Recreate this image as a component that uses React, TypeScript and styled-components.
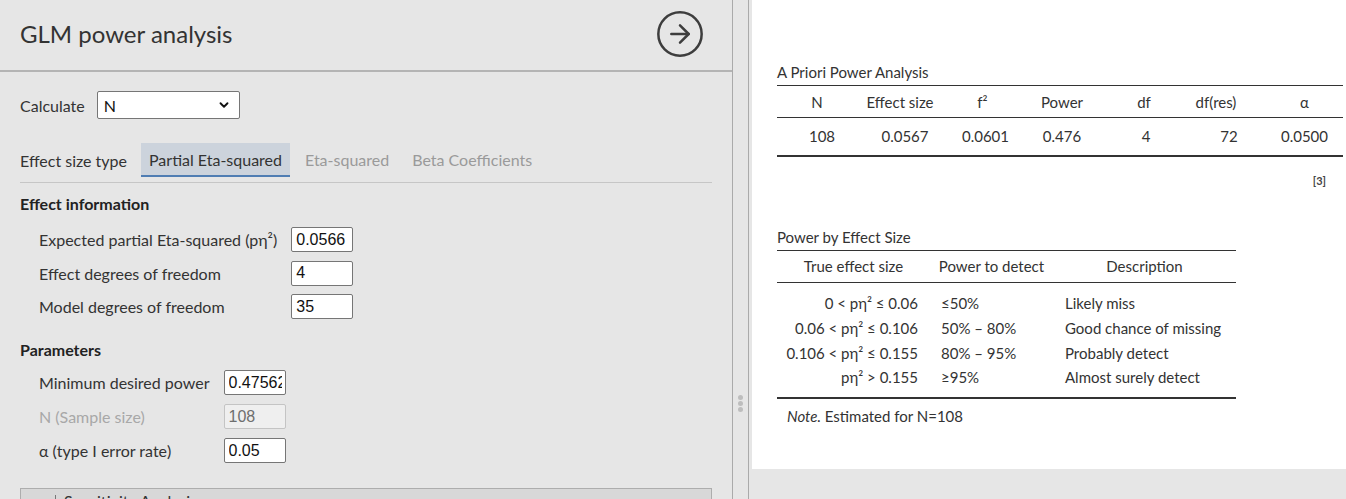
import React from 'react';
import styled, { createGlobalStyle } from 'styled-components';
import { CircleArrowRight, ChevronDown, Plus } from 'lucide-react';

const GlobalStyle = createGlobalStyle`
  html, body { margin: 0; padding: 0; height: 100%; overflow: hidden; background: #e6e6e6; }
  #root { height: 100%; }
  * { box-sizing: border-box; }
`;

const UI_FONT = `Lato, "Segoe UI", "Noto Sans", sans-serif`;
const INPUT_FONT = `"Liberation Sans", Arial, sans-serif`;

const Page = styled.div`
  display: flex;
  height: 499px;
  font-family: ${UI_FONT};
  color: #333;
`;

const LeftPanel = styled.section`
  width: 733px;
  flex: none;
  border-right: 1px solid #aaa;
  display: flex;
  flex-direction: column;
  overflow: hidden;
`;

const Header = styled.header`
  height: 72px;
  flex: none;
  display: flex;
  align-items: center;
  justify-content: space-between;
  padding: 0 26px 3px 20px;
  border-bottom: 2px solid #b4b4b4;
`;

const Title = styled.h1`
  margin: 0;
  font-size: 24px;
  font-weight: 400;
  color: #333;
`;

const Body = styled.div`
  padding: 19px 20px 0 20px;
  display: flex;
  flex-direction: column;
`;

const Row = styled.div`
  display: flex;
  align-items: center;
  gap: 12px;
  font-size: 16px;
`;

const SelectBox = styled.div`
  width: 143px;
  height: 28px;
  display: flex;
  align-items: center;
  justify-content: space-between;
  padding: 0 8px 0 6px;
  background: #fff;
  border: 1px solid #767676;
  border-radius: 2px;
  font-size: 16px;
  color: #111;
`;

const TabBar = styled.div`
  margin-top: 24px;
  display: flex;
  align-items: stretch;
  height: 40px;
  padding-bottom: 5px;
  border-bottom: 1px solid #c6c6c6;
  font-size: 16px;
`;

const TabLabel = styled.span`
  display: flex;
  align-items: center;
  margin-right: 14px;
  color: #333;
`;

const Tab = styled.span<{ $active?: boolean }>`
  display: flex;
  align-items: center;
  padding: 0 8px;
  margin-right: 7px;
  color: ${(p) => (p.$active ? '#333' : '#9a9a9a')};
  background: ${(p) => (p.$active ? '#ccd3dc' : 'transparent')};
  border-bottom: 2px solid ${(p) => (p.$active ? '#4f7db3' : 'transparent')};
`;

const SectionTitle = styled.h2<{ $top: number }>`
  margin: ${(p) => p.$top}px 0 0 0;
  font-size: 16px;
  line-height: 20px;
  font-weight: 700;
  color: #222;
`;

const FieldGrid = styled.div<{ $top: number; $gap: number }>`
  margin-top: ${(p) => p.$top}px;
  padding-left: 19px;
  display: grid;
  grid-template-columns: max-content 62px;
  column-gap: 14px;
  row-gap: ${(p) => p.$gap}px;
  align-items: center;
`;

const FieldLabel = styled.label<{ $disabled?: boolean }>`
  font-size: 16px;
  color: ${(p) => (p.$disabled ? '#a8a8a8' : '#333')};
`;

const TextInput = styled.input`
  width: 62px;
  height: 25px;
  padding: 0 3px 0 4px;
  border: 1px solid #767676;
  border-radius: 2px;
  background: #fff;
  font-family: ${INPUT_FONT};
  font-size: 16px;
  color: #111;
  outline: none;
  &:disabled {
    background: #efefef;
    border-color: #c4c4c4;
    color: #6e6e6e;
  }
`;

const CollapseBar = styled.div`
  margin-top: 25px;
  height: 34px;
  display: flex;
  align-items: flex-start;
  padding-top: 2px;
  line-height: 20px;
  background: #d8d8d8;
  border: 1px solid #adadad;
  font-size: 16px;
  color: #333;
`;

const CollapseIcon = styled.span`
  width: 35px;
  height: 22px;
  margin-top: 4px;
  margin-right: 8px;
  display: flex;
  align-items: flex-start;
  justify-content: center;
  padding-top: 5px;
  border-right: 1px solid #777;
  color: #555;
`;

const Splitter = styled.div`
  width: 16px;
  flex: none;
  border-right: 1px solid #aaa;
  display: flex;
  flex-direction: column;
  align-items: center;
  gap: 1px;
  padding-top: 395px;
`;

const Dot = styled.span`
  width: 5px;
  height: 5px;
  border-radius: 50%;
  background: #bdbdbd;
`;

const ResultsArea = styled.section`
  flex: 1;
  padding-left: 3px;
  display: flex;
  flex-direction: column;
`;

const ResultsDoc = styled.div`
  height: 469px;
  background: #fff;
  padding: 63px 3px 0 25px;
  font-size: 15px;
  color: #333;
`;

const TableTitle = styled.div`
  font-size: 15px;
  line-height: 18px;
  margin-bottom: 4px;
  color: #333;
`;

const Table = styled.table<{ $width: number }>`
  width: ${(p) => p.$width}px;
  border-collapse: collapse;
  table-layout: fixed;
  font-size: 15px;
  border-top: 1px solid #333;
  border-bottom: 2px solid #333;
`;

const HeadCell = styled.th<{ $w: number; $shift?: number; $h: number }>`
  width: ${(p) => p.$w}px;
  height: ${(p) => p.$h}px;
  padding: 0 0 0 ${(p) => (p.$shift ?? 0) * 2}px;
  font-weight: 400;
  text-align: center;
  border-bottom: 1px solid #333;
  white-space: nowrap;
`;

const DataCell = styled.td<{ $align: 'left' | 'right' | 'center'; $padL?: number; $padR?: number }>`
  height: 25px;
  padding: 0 ${(p) => p.$padR ?? 0}px 0 ${(p) => p.$padL ?? 0}px;
  text-align: ${(p) => p.$align};
  white-space: nowrap;
`;

const BodyRow = styled.tr<{ $first?: boolean; $last?: boolean; $h?: number }>`
  height: ${(p) => p.$h ?? 25}px;
  td {
    padding-top: ${(p) => (p.$first ? 8 : 0)}px;
    padding-bottom: ${(p) => (p.$last ? 8 : 0)}px;
  }
`;

const RefMark = styled.div`
  width: 566px;
  text-align: right;
  padding-right: 17px;
  margin-top: 17px;
  font-size: 11px;
  font-weight: 700;
  color: #444;
`;

const Block = styled.div<{ $top: number }>`
  margin-top: ${(p) => p.$top}px;
`;

const Note = styled.div`
  padding-left: 10px;
  margin-top: 8px;
  font-size: 15px;
  color: #333;
  em { font-style: italic; }
`;

const t1Cols = [
  { h: 'N', w: 80, hs: 0, d: '108', ds: 5 },
  { h: 'Effect size', w: 86, hs: 0, d: '0.0567', ds: 5 },
  { h: 'f²', w: 79, hs: 0, d: '0.0601', ds: 3 },
  { h: 'Power', w: 80, hs: 0, d: '0.476', ds: 0 },
  { h: 'df', w: 84, hs: 0, d: '4', ds: 2 },
  { h: 'df(res)', w: 60, hs: 0, d: '72', ds: 13 },
  { h: 'α', w: 97, hs: 10, d: '0.0500', ds: 10 },
];

const t2Rows = [
  ['0 < pη² ≤ 0.06', '≤50%', 'Likely miss'],
  ['0.06 < pη² ≤ 0.106', '50% – 80%', 'Good chance of missing'],
  ['0.106 < pη² ≤ 0.155', '80% – 95%', 'Probably detect'],
  ['pη² > 0.155', '≥95%', 'Almost surely detect'],
];

export default function App() {
  return (
    <>
      <GlobalStyle />
      <Page>
        <LeftPanel>
          <Header>
            <Title>GLM power analysis</Title>
            <CircleArrowRight size={52} strokeWidth={1.15} color="#3d3d3d" />
          </Header>
          <Body>
            <Row>
              <span>Calculate</span>
              <SelectBox>
                <span>N</span>
                <ChevronDown size={14} strokeWidth={3.2} color="#111" />
              </SelectBox>
            </Row>
            <TabBar>
              <TabLabel>Effect size type</TabLabel>
              <Tab $active>Partial Eta-squared</Tab>
              <Tab>Eta-squared</Tab>
              <Tab>Beta Coefficients</Tab>
            </TabBar>

            <SectionTitle $top={11}>Effect information</SectionTitle>
            <FieldGrid $top={13} $gap={8.5}>
              <FieldLabel>Expected partial Eta-squared (pη²)</FieldLabel>
              <TextInput defaultValue="0.0566" />
              <FieldLabel>Effect degrees of freedom</FieldLabel>
              <TextInput defaultValue="4" />
              <FieldLabel>Model degrees of freedom</FieldLabel>
              <TextInput defaultValue="35" />
            </FieldGrid>

            <SectionTitle $top={21}>Parameters</SectionTitle>
            <FieldGrid $top={10} $gap={9}>
              <FieldLabel>Minimum desired power</FieldLabel>
              <TextInput defaultValue="0.475620" />
              <FieldLabel $disabled>N (Sample size)</FieldLabel>
              <TextInput defaultValue="108" disabled />
              <FieldLabel>α (type I error rate)</FieldLabel>
              <TextInput defaultValue="0.05" />
            </FieldGrid>

            <CollapseBar>
              <CollapseIcon>
                <Plus size={12} strokeWidth={2} />
              </CollapseIcon>
              <span>Sensitivity Analysis</span>
            </CollapseBar>
          </Body>
        </LeftPanel>

        <Splitter>
          <Dot />
          <Dot />
          <Dot />
        </Splitter>

        <ResultsArea>
          <ResultsDoc>
            <TableTitle>A Priori Power Analysis</TableTitle>
            <Table $width={566}>
              <thead>
                <tr>
                  {t1Cols.map((c) => (
                    <HeadCell key={c.h} $w={c.w} $shift={c.hs} $h={32}>
                      {c.h}
                    </HeadCell>
                  ))}
                </tr>
              </thead>
              <tbody>
                <BodyRow $h={38}>
                  {t1Cols.map((c) => (
                    <DataCell key={c.h} $align="center" $padL={c.ds * 2}>
                      {c.d}
                    </DataCell>
                  ))}
                </BodyRow>
              </tbody>
            </Table>
            <RefMark>[3]</RefMark>

            <Block $top={41}>
              <TableTitle>Power by Effect Size</TableTitle>
              <Table $width={459}>
                <thead>
                  <tr>
                    <HeadCell $w={153} $h={32}>True effect size</HeadCell>
                    <HeadCell $w={123} $h={32}>Power to detect</HeadCell>
                    <HeadCell $w={183} $h={32}>Description</HeadCell>
                  </tr>
                </thead>
                <tbody>
                  {t2Rows.map((r, i) => (
                    <BodyRow
                      key={r[0]}
                      $first={i === 0}
                      $last={i === t2Rows.length - 1}
                      $h={i === 0 || i === t2Rows.length - 1 ? 33 : 25}
                    >
                      <DataCell $align="right" $padR={12}>{r[0]}</DataCell>
                      <DataCell $align="left" $padL={11}>{r[1]}</DataCell>
                      <DataCell $align="left" $padL={12}>{r[2]}</DataCell>
                    </BodyRow>
                  ))}
                </tbody>
              </Table>
              <Note>
                <em>Note.</em> Estimated for N=108
              </Note>
            </Block>
          </ResultsDoc>
        </ResultsArea>
      </Page>
    </>
  );
}
